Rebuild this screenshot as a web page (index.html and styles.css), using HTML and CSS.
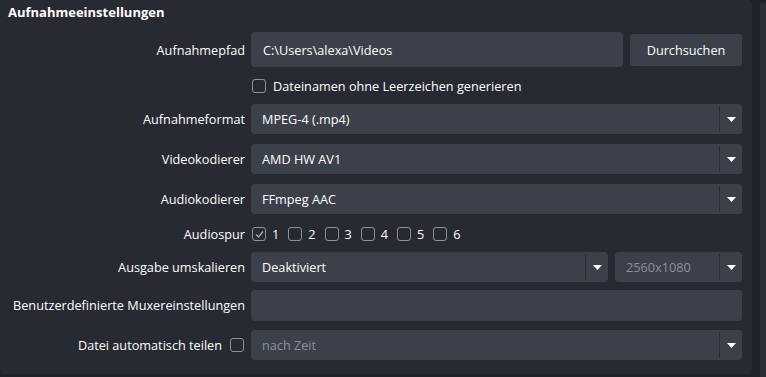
FILE: index.html
```html
<!DOCTYPE html>
<html lang="de">
<head>
    <meta charset="UTF-8">
    <meta name="viewport" content="width=device-width, initial-scale=1.0">
    <title>Aufnahmeeinstellungen</title>
    <link rel="stylesheet" href="styles.css">
</head>
<body>
    <div class="window">
        <section class="group">
            <h3 class="group-title">Aufnahmeeinstellungen</h3>
            <div class="form-grid">
                <label class="field-label">Aufnahmepfad</label>
                <div class="field-row">
                    <div class="line-edit path">C:\Users\alexa\Videos</div>
                    <button class="btn" type="button">Durchsuchen</button>
                </div>

                <span></span>
                <label class="check row-check"><span class="box"></span>Dateinamen ohne Leerzeichen generieren</label>

                <label class="field-label">Aufnahmeformat</label>
                <div class="combo">
                    <span class="combo-text">MPEG-4 (.mp4)</span>
                    <span class="combo-arrow"><svg width="9" height="5" viewBox="0 0 9 5"><polygon points="0,0 9,0 4.5,5" fill="#fff"/></svg></span>
                </div>

                <label class="field-label">Videokodierer</label>
                <div class="combo">
                    <span class="combo-text">AMD HW AV1</span>
                    <span class="combo-arrow"><svg width="9" height="5" viewBox="0 0 9 5"><polygon points="0,0 9,0 4.5,5" fill="#fff"/></svg></span>
                </div>

                <label class="field-label">Audiokodierer</label>
                <div class="combo">
                    <span class="combo-text">FFmpeg AAC</span>
                    <span class="combo-arrow"><svg width="9" height="5" viewBox="0 0 9 5"><polygon points="0,0 9,0 4.5,5" fill="#fff"/></svg></span>
                </div>

                <label class="field-label">Audiospur</label>
                <div class="tracks">
                    <label class="check"><span class="box checked"><svg width="11" height="11" viewBox="0 0 11 11"><polyline points="2,5.5 4.5,8 9,2.5" fill="none" stroke="#a4a7b0" stroke-width="1.4"/></svg></span>1</label>
                    <label class="check"><span class="box"></span>2</label>
                    <label class="check"><span class="box"></span>3</label>
                    <label class="check"><span class="box"></span>4</label>
                    <label class="check"><span class="box"></span>5</label>
                    <label class="check"><span class="box"></span>6</label>
                </div>

                <label class="field-label">Ausgabe umskalieren</label>
                <div class="field-row">
                    <div class="combo wide">
                        <span class="combo-text">Deaktiviert</span>
                        <span class="combo-arrow"><svg width="9" height="5" viewBox="0 0 9 5"><polygon points="0,0 9,0 4.5,5" fill="#fff"/></svg></span>
                    </div>
                    <div class="combo res">
                        <span class="combo-text disabled">2560x1080</span>
                        <span class="combo-arrow"><svg width="9" height="5" viewBox="0 0 9 5"><polygon points="0,0 9,0 4.5,5" fill="#fff"/></svg></span>
                    </div>
                </div>

                <label class="field-label">Benutzerdefinierte Muxereinstellungen</label>
                <div class="line-edit mux"></div>

                <label class="field-label split-label">Datei automatisch teilen <span class="box"></span></label>
                <div class="combo">
                    <span class="combo-text disabled">nach Zeit</span>
                    <span class="combo-arrow"><svg width="9" height="5" viewBox="0 0 9 5"><polygon points="0,0 9,0 4.5,5" fill="#fff"/></svg></span>
                </div>
            </div>
        </section>
        <div class="scrollbar"></div>
    </div>
</body>
</html>
```

FILE: styles.css
```css
body {
    margin: 0;
    background-color: #1f212a;
    font-family: "Open Sans", "DejaVu Sans", sans-serif;
    font-size: 12.7px;
    color: #fefefe;
}

.window {
    display: flex;
    height: 377px;
    overflow: hidden;
}

.group {
    width: 752px;
    height: 374px;
    box-sizing: border-box;
    background-color: #272a33;
    border-radius: 0 4px 4px 4px;
    padding: 0 10px 0 8px;
}

.group-title {
    margin: 0;
    height: 24px;
    padding-top: 3px;
    box-sizing: border-box;
    font-size: 13px;
    font-weight: 700;
    line-height: 18px;
}

/* rows: path, checkbox, 3 combos, tracks, rescale, mux, split */
.form-grid {
    display: grid;
    grid-template-columns: 237px 1fr;
    grid-template-rows: 35px 21px 32px 32px 32px 20px 30px 32px 30px;
    column-gap: 6px;
    row-gap: 8px;
    margin-top: 8px;
}

.field-label {
    display: flex;
    align-items: center;
    justify-content: flex-end;
    white-space: nowrap;
    height: 30px;
    align-self: start;
}

.field-row {
    display: flex;
    gap: 7px;
    align-items: center;
}

.form-grid > .field-label:first-child {
    height: 35px;
}

.line-edit {
    background-color: #3c404b;
    border-radius: 4px;
    padding: 0 12px;
    display: flex;
    align-items: center;
    box-sizing: border-box;
}

.line-edit.path {
    flex: 1;
    height: 35px;
}

.line-edit.mux {
    height: 31px;
}

.btn {
    width: 112px;
    height: 32px;
    border: none;
    border-radius: 4px;
    background-color: #3c404b;
    color: #fefefe;
    font-family: inherit;
    font-size: 12.7px;
    padding: 0;
}

.check {
    display: flex;
    align-items: center;
    gap: 7px;
}

.row-check {
    padding-left: 1px;
}

.box {
    width: 14px;
    height: 14px;
    box-sizing: border-box;
    border: 1px solid #8d909a;
    border-radius: 3px;
    display: inline-flex;
    align-items: center;
    justify-content: center;
    flex-shrink: 0;
}

.combo {
    height: 30px;
    background-color: #3c404b;
    border-radius: 4px;
    display: flex;
    align-items: stretch;
    align-self: start;
}

.combo-text {
    flex: 1;
    display: flex;
    align-items: center;
    padding-left: 11px;
}

.combo-text.disabled {
    color: #8c909b;
}

.combo-arrow {
    width: 22px;
    border-left: 1px solid #2a2d36;
    margin: 2px 0;
    display: flex;
    align-items: center;
    justify-content: center;
}

.combo.wide {
    flex: 1;
}

.combo.res {
    width: 127px;
}

.tracks {
    display: flex;
    align-items: center;
    gap: 9px;
    padding-left: 1px;
}

.tracks .check {
    gap: 6px;
}

.form-grid > .field-label:nth-of-type(6) {
    height: 20px;
}

.split-label {
    gap: 8px;
}

.split-label .box {
    margin-right: 1px;
}

.scrollbar {
    width: 6px;
    margin: 2px 0 0 8px;
    background-color: #2b2e38;
    border-radius: 3px 3px 0 0;
}
```
